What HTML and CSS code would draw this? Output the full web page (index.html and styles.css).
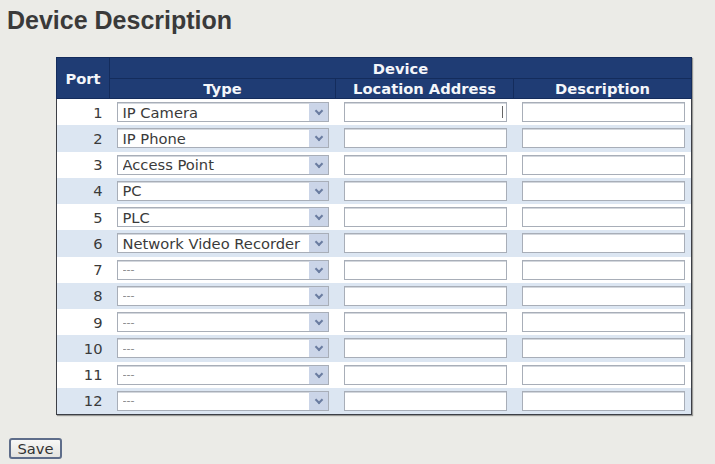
FILE: index.html
```html
<!DOCTYPE html>
<html lang="en">
<head>
    <meta charset="UTF-8">
    <meta name="viewport" content="width=device-width, initial-scale=1.0">
    <title>Device Description</title>
    <link rel="stylesheet" href="styles.css">
</head>
<body>
    <h1>Device Description</h1>

    <table class="device-table">
        <colgroup>
            <col class="col-port">
            <col class="col-type">
            <col class="col-loc">
            <col class="col-desc">
        </colgroup>
        <thead>
            <tr class="head-top">
                <th rowspan="2">Port</th>
                <th colspan="3">Device</th>
            </tr>
            <tr class="head-sub">
                <th>Type</th>
                <th>Location Address</th>
                <th>Description</th>
            </tr>
        </thead>
        <tbody id="deviceRows">
            <!-- rows built below -->
        </tbody>
    </table>

    <button class="save-btn">Save</button>

    <script>
        // Port types as shown on the switch
        const types = ["IP Camera", "IP Phone", "Access Point", "PC", "PLC", "Network Video Recorder",
                       "---", "---", "---", "---", "---", "---"];

        function buildRows() {
            const tbody = document.getElementById('deviceRows');
            types.forEach((type, i) => {
                const tr = document.createElement('tr');
                tr.className = i % 2 ? 'even' : 'odd';
                tr.innerHTML = `
                    <td class="port">${i + 1}</td>
                    <td class="type">
                        <div class="select-wrap">
                            <select class="${type === '---' ? 'empty' : ''}"><option>${type}</option></select>
                            <span class="arrow"></span>
                        </div>
                    </td>
                    <td class="loc"><div class="input-wrap${i === 0 ? ' focused' : ''}"><input type="text"></div></td>
                    <td class="desc"><input type="text"></td>
                `;
                tbody.appendChild(tr);
            });
        }

        buildRows();
    </script>
</body>
</html>
```

FILE: styles.css
```css
body {
    margin: 0;
    background-color: #ebebe7;
    font-family: "DejaVu Sans", Verdana, sans-serif;
    font-size: 14.7px;
    color: #333;
}
h1 {
    margin: 6px 0 0 7px;
    font-family: "Liberation Sans", Arial, sans-serif;
    font-size: 25px;
    line-height: 28px;
    font-weight: bold;
    color: #3a3a3a;
}

/* Device table */
.device-table {
    margin: 23px 0 0 56px;
    width: 635px;
    table-layout: fixed;
    border-collapse: collapse;
    border: 1px solid #3c3f46;
    box-shadow: 1px 1px 1px rgba(0,0,0,0.35);
    background: #fff;
}
.col-port { width: 53px; }
.col-type { width: 226px; }
.col-loc { width: 178px; }
.col-desc { width: 178px; }

th {
    background: #1f3c74;
    color: #f4f6fa;
    font-weight: bold;
    font-size: 14.7px;
    padding: 0;
    border: 1px solid #142c5c;
    text-align: center;
}
.head-top th { height: 20px; }
.head-sub th { height: 19px; line-height: 19px; }

td {
    padding: 0;
    height: 26.25px;
    vertical-align: middle;
}
tr.even td { background: #dce6f2; }

td.port {
    text-align: right;
    padding-right: 7px;
    color: #3a3a3a;
}
td.type { padding: 0 7px 0 7px; }
td.loc, td.desc { padding: 0 7px 0 8px; }

.select-wrap {
    position: relative;
    height: 20px;
}
select {
    appearance: none;
    -webkit-appearance: none;
    display: block;
    width: 100%;
    height: 20px;
    margin: 0;
    padding: 0 0 0 5px;
    border: 1px solid #a8aeb8;
    border-radius: 0;
    background: #fff;
    font-family: inherit;
    font-size: 14.7px;
    color: #3a3a3a;
    box-shadow: inset 0 1px 0 #d3d7dd;
}
select.empty { color: #888; font-size: 11px; }
.arrow {
    position: absolute;
    top: 1px;
    right: 1px;
    width: 19px;
    height: 18px;
    background: #cbd5e8;
    pointer-events: none;
}
.arrow::after {
    content: "";
    position: absolute;
    left: 7px;
    top: 5px;
    width: 4px;
    height: 4px;
    border-right: 2px solid #6a7ca0;
    border-bottom: 2px solid #6a7ca0;
    transform: rotate(45deg);
}

.input-wrap { position: relative; }
.input-wrap.focused::after {
    content: "";
    position: absolute;
    right: 4px;
    top: 4px;
    width: 1px;
    height: 12px;
    background: #666;
}
input[type="text"] {
    display: block;
    box-sizing: border-box;
    width: 163px;
    height: 20px;
    margin: 0;
    border: 1px solid #a8aeb8;
    background: #fff;
    box-shadow: inset 0 1px 0 #d3d7dd;
}

.save-btn {
    display: block;
    margin: 23px 0 0 9px;
    width: 53px;
    height: 21px;
    padding: 0;
    border: 2px solid #5e6d8a;
    border-radius: 3px;
    background: linear-gradient(#f8f8f6, #e3e3df);
    font-family: inherit;
    font-size: 14.7px;
    color: #333;
    cursor: pointer;
}
```
